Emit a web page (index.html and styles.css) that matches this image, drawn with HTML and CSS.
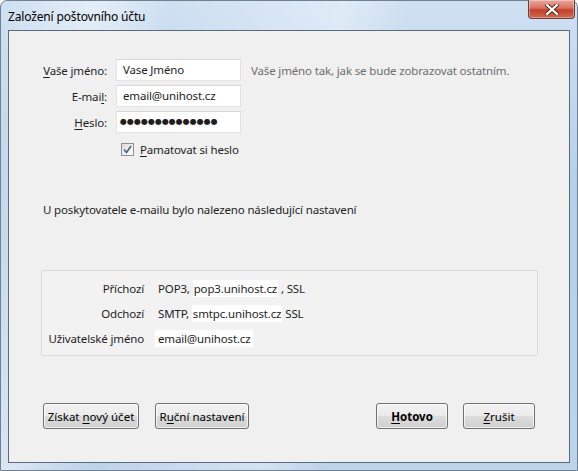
FILE: index.html
```html
<!DOCTYPE html>
<html lang="cs">
<head>
    <meta charset="UTF-8">
    <title>Založení poštovního účtu</title>
    <link rel="stylesheet" href="styles.css">
</head>
<body>
    <div class="window">
        <div class="titlebar">
            <span class="title">Založení poštovního účtu</span>
            <button class="close" aria-label="Zavřít">
                <svg width="14" height="11" viewBox="0 0 14 11">
                    <path d="M2 1 L12 10 M12 1 L2 10" stroke="#5a2a22" stroke-width="4" stroke-linecap="square"/>
                    <path d="M2 1 L12 10 M12 1 L2 10" stroke="#ffffff" stroke-width="2.2" stroke-linecap="square"/>
                </svg>
            </button>
        </div>

        <div class="client">
            <div class="form">
                <label class="lbl"><u>V</u>aše jméno:</label>
                <div class="field">Vase Jméno</div>
                <span class="hint">Vaše jméno tak, jak se bude zobrazovat ostatním.</span>

                <label class="lbl">E-mai<u>l</u>:</label>
                <div class="field">email@unihost.cz</div>
                <span></span>

                <label class="lbl"><u>H</u>eslo:</label>
                <div class="field dots">●●●●●●●●●●●●●●</div>
                <span></span>

                <span></span>
                <label class="remember">
                    <span class="check">
                        <svg width="9" height="9" viewBox="0 0 9 9">
                            <path d="M1 4.5 L3.5 7.5 L8 1" fill="none" stroke="#4a5f86" stroke-width="1.6"/>
                        </svg>
                    </span>
                    <span><u>P</u>amatovat si heslo</span>
                </label>
                <span></span>
            </div>

            <p class="message">U poskytovatele e-mailu bylo nalezeno následující nastavení</p>

            <div class="settings">
                <span class="key">Příchozí</span>
                <span class="val">POP3, <span class="box">pop3.unihost.cz</span> , SSL</span>

                <span class="key">Odchozí</span>
                <span class="val">SMTP, <span class="box">smtpc.unihost.cz</span> SSL</span>

                <span class="key">Uživatelské jméno</span>
                <span class="val"><span class="box user">email@unihost.cz</span></span>
            </div>

            <div class="actions">
                <button class="btn new-account">Získat <u>n</u>ový účet</button>
                <button class="btn manual">R<u>u</u>ční nastavení</button>
                <span class="spacer"></span>
                <button class="btn wide default"><u>H</u>otovo</button>
                <button class="btn wide"><u>Z</u>rušit</button>
            </div>
        </div>
    </div>
</body>
</html>
```

FILE: styles.css
```css
* { box-sizing: border-box; }

body {
    margin: 0;
    font-family: "Noto Sans", "Open Sans", sans-serif;
    font-size: 11.5px;
    letter-spacing: -0.15px;
    color: #1e1e1e;
}

u { text-decoration: underline; text-underline-offset: 2px; }

/* Aero frame */
.window {
    width: 578px;
    height: 471px;
    display: flex;
    flex-direction: column;
    padding: 0 7px 7px 7px;
    border: 1px solid #6f8193;
    border-radius: 7px 7px 0 0;
    background:
        linear-gradient(100deg, rgba(255,255,255,0) 0%, rgba(255,255,255,0.45) 14%, rgba(255,255,255,0) 26%, rgba(255,255,255,0.35) 52%, rgba(255,255,255,0) 62%),
        linear-gradient(180deg, #cfe0f2 0%, #b7cfe8 40%, #bdd3ea 100%);
}

.titlebar {
    height: 29px;
    display: flex;
    align-items: flex-start;
    justify-content: space-between;
}

.title {
    margin-top: 7px;
    font-size: 12px;
    color: #000;
}

.close {
    width: 47px;
    height: 19px;
    margin: -1px -5px 0 0;
    padding: 0;
    display: flex;
    align-items: center;
    justify-content: center;
    border: 1px solid #6e3c38;
    border-top: none;
    border-radius: 0 0 4px 4px;
    background: linear-gradient(180deg, #e9a99c 0%, #d8705e 45%, #c2412b 55%, #cf6a4f 100%);
    box-shadow: inset 0 0 0 1px rgba(255,255,255,0.35);
}

/* dialog body */
.client {
    flex: 1;
    display: flex;
    flex-direction: column;
    background: #f0f0f0;
    border: 1px solid #5c6b7c;
}

.form {
    display: grid;
    grid-template-columns: 98px 125px auto;
    grid-auto-rows: 22px;
    column-gap: 9px;
    row-gap: 4px;
    margin-top: 28px;
    align-items: center;
}

.lbl { text-align: right; }

.field {
    height: 22px;
    line-height: 20px;
    padding: 0 6px;
    background: #fff;
    border: 1px solid #e3e3e3;
    border-top-color: #d6d6d6;
    white-space: nowrap;
}

.dots {
    font-family: "DejaVu Sans", sans-serif;
    font-size: 8px;
    letter-spacing: 0;
    padding-left: 3px;
}

.hint {
    color: #6d6d6d;
    margin-left: 1px;
    white-space: nowrap;
}

.remember {
    display: flex;
    align-items: center;
    gap: 6px;
    padding-left: 5px;
    margin-top: 2px;
    white-space: nowrap;
}

.check {
    width: 13px;
    height: 13px;
    display: flex;
    align-items: center;
    justify-content: center;
    border: 1px solid #8e8f8f;
    background: linear-gradient(135deg, #dcdcdc, #fcfcfc);
}

.message {
    margin: 43px 0 0 34px;
}

.settings {
    display: grid;
    grid-template-columns: 102px auto;
    column-gap: 14px;
    grid-auto-rows: 25px;
    align-items: center;
    margin: 53px 31px 0 32px;
    padding: 5px 0 6px;
    height: 86px;
    border: 1px solid #dadada;
    border-radius: 2px;
    background: #f2f2f2;
}

.key { text-align: right; white-space: nowrap; }

.val { white-space: nowrap; }

.box {
    background: #fff;
    padding: 1px 1px;
}

.user { padding: 1px 3px; margin-left: -3px; }

.actions {
    display: flex;
    gap: 16px;
    margin: 47px 34px 0 34px;
}

.spacer { flex: 1; }

.btn {
    height: 26px;
    padding: 0 2px;
    font: inherit;
    color: #000;
    border: 1px solid #707070;
    border-radius: 3px;
    background: linear-gradient(180deg, #f2f2f2 0%, #ebebeb 49%, #dddddd 50%, #cfcfcf 100%);
    box-shadow: inset 0 0 0 1px rgba(255,255,255,0.7);
    white-space: nowrap;
}

.new-account { width: 96px; }

.manual { width: 94px; }

.wide { width: 72px; }

.default { font-weight: bold; margin-right: -1px; }
```
